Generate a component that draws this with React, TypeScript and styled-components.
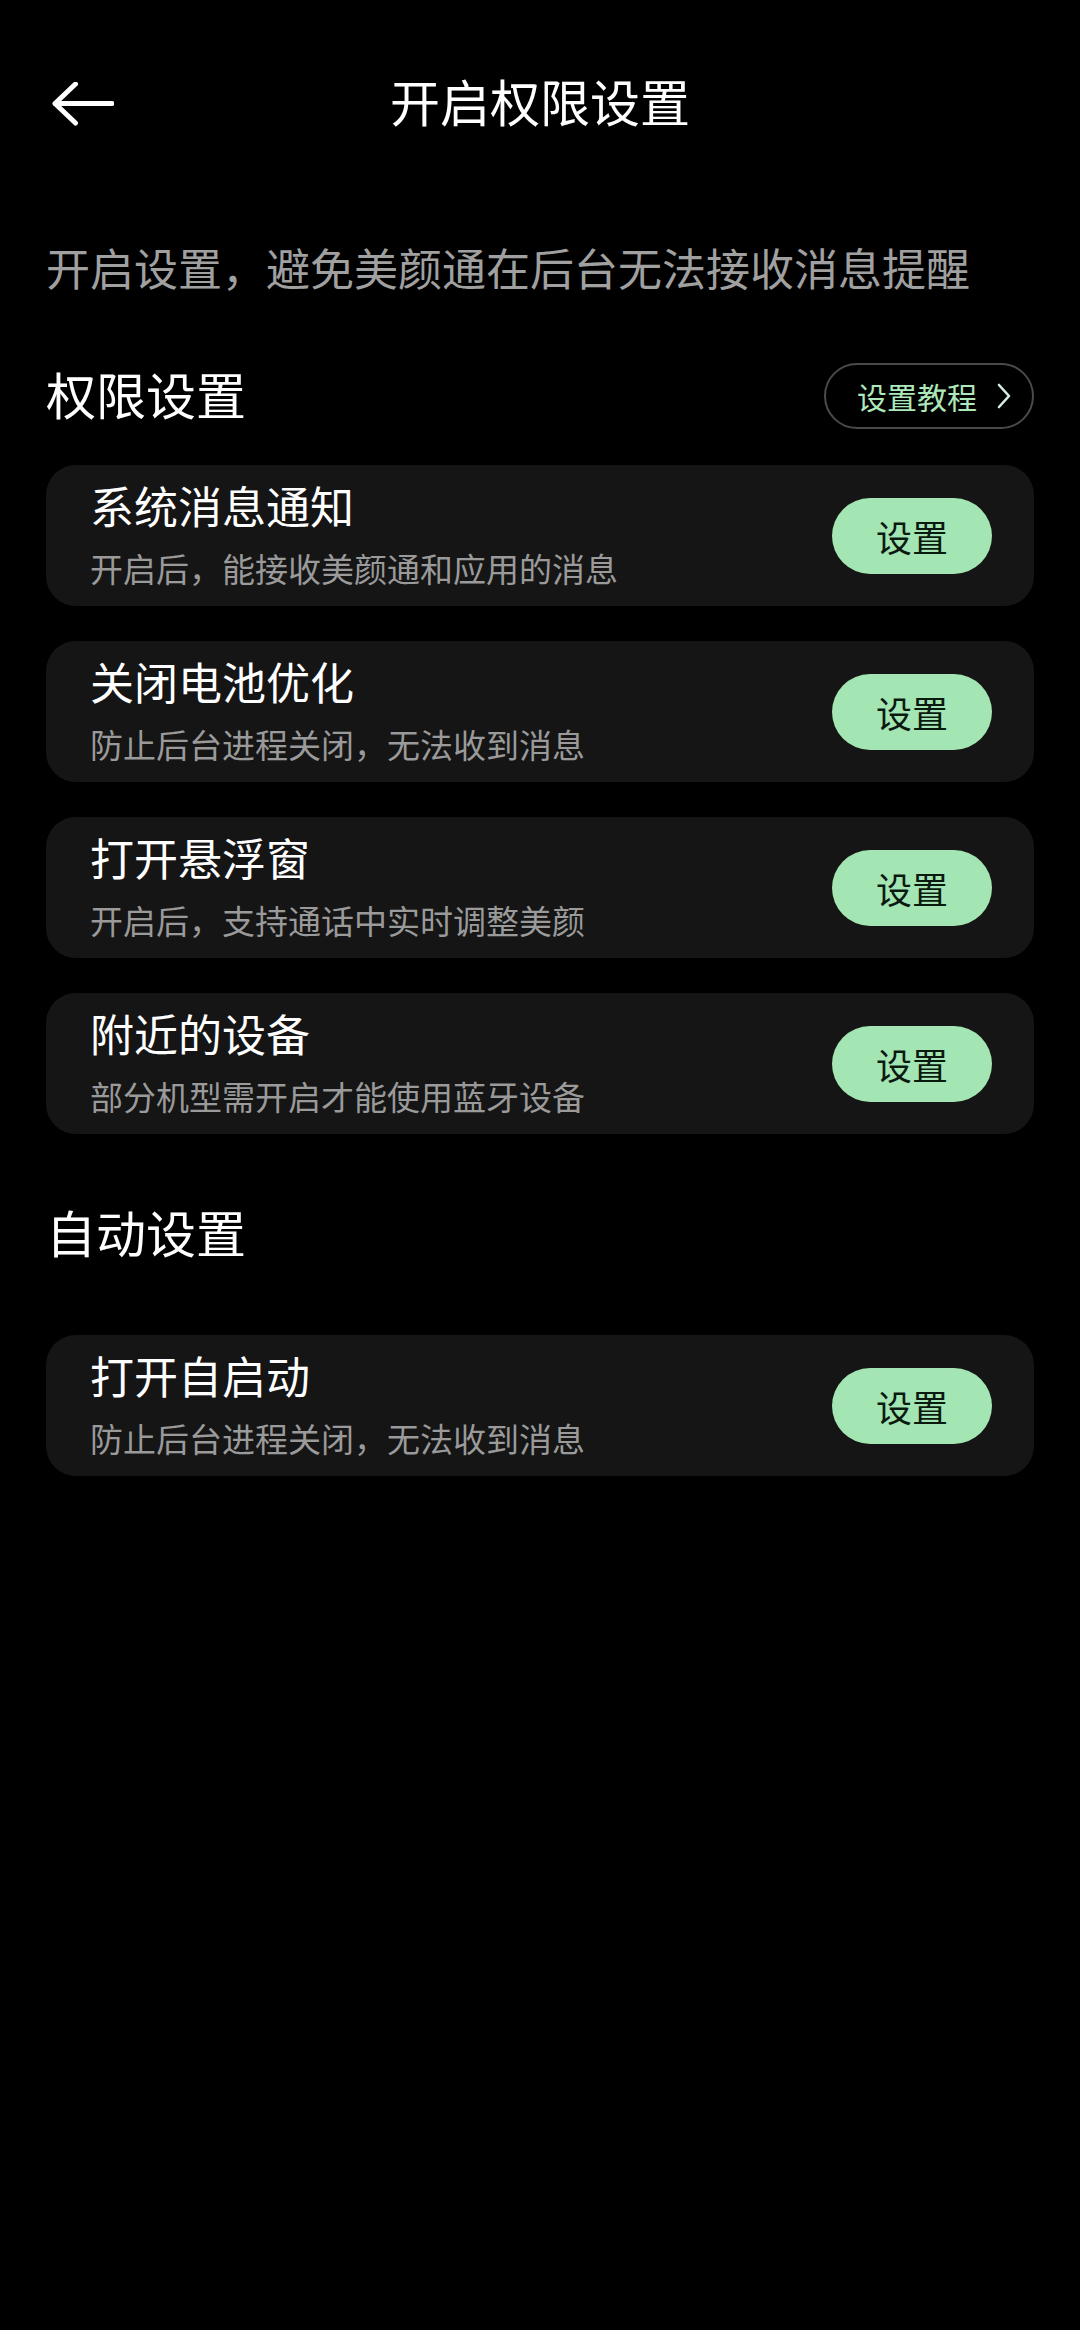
import React from 'react';
import styled, { createGlobalStyle } from 'styled-components';

const GlobalStyle = createGlobalStyle`
  html, body {
    margin: 0;
    padding: 0;
    background: #000;
  }
  body {
    font-family: "Noto Sans CJK SC", "Noto Sans", sans-serif;
    color: #fff;
  }
`;

const Page = styled.div`
  width: 1080px;
  min-height: 2330px;
  background: #000;
  padding: 0 46px;
  box-sizing: border-box;
`;

const Header = styled.header`
  height: 208px;
  margin: 0 -46px;
  padding: 0 52px;
  display: grid;
  grid-template-columns: 1fr auto 1fr;
  align-items: center;
`;

const BackButton = styled.div`
  width: 62px;
  height: 44px;
  display: flex;
  align-items: center;
`;

const Title = styled.h1`
  margin: 0 0 9px;
  font-size: 50px;
  font-weight: 400;
  line-height: 60px;
  color: #fff;
`;

const Intro = styled.p`
  margin: 29px 0 0;
  font-size: 44px;
  line-height: 60px;
  color: #a0a0a0;
`;

const SectionRow = styled.div<{ $top: number; $bottom: number }>`
  margin-top: ${(p) => p.$top}px;
  margin-bottom: ${(p) => p.$bottom}px;
  height: 66px;
  display: flex;
  align-items: center;
  justify-content: space-between;
`;

const SectionTitle = styled.h2`
  margin: 0 0 6px;
  font-size: 50px;
  font-weight: 400;
  line-height: 60px;
  color: #fff;
`;

const TutorialButton = styled.div`
  height: 66px;
  width: 210px;
  box-sizing: border-box;
  border: 2px solid #4a4a4a;
  border-radius: 33px;
  display: flex;
  align-items: center;
  padding-left: 31px;
  gap: 20px;
  font-size: 30px;
  color: #ade8bb;
`;

const CardList = styled.div`
  display: flex;
  flex-direction: column;
  gap: 35px;
`;

const Card = styled.div`
  height: 141px;
  box-sizing: border-box;
  background: #151515;
  border-radius: 30px;
  padding: 11px 42px 16px 44px;
  display: flex;
  align-items: center;
  justify-content: space-between;
`;

const CardText = styled.div`
  align-self: flex-start;
  display: flex;
  flex-direction: column;
  gap: 12px;
`;

const CardTitle = styled.div`
  font-size: 44px;
  line-height: 58px;
  color: #fff;
`;

const CardDesc = styled.div`
  font-size: 33px;
  line-height: 44px;
  color: #9a9a9a;
`;

const SetButton = styled.button`
  width: 160px;
  height: 76px;
  margin-top: 5px;
  border: none;
  border-radius: 38px;
  background: #a3e5b3;
  color: #0b1a10;
  font-family: inherit;
  font-size: 36px;
  padding: 0;
  display: flex;
  align-items: center;
  justify-content: center;
`;

const BackIcon = () => (
  <svg width="62" height="44" viewBox="0 0 62 44" fill="none">
    <path
      d="M60 21.5H3M23.5 2L3 21.5L23.5 41"
      stroke="#fff"
      strokeWidth="5"
      strokeLinecap="round"
      strokeLinejoin="round"
    />
  </svg>
);

const Chevron = () => (
  <svg width="14" height="26" viewBox="0 0 14 26" fill="none">
    <path d="M2 2L12 13L2 24" stroke="#d6ece0" strokeWidth="2.6" strokeLinecap="round" strokeLinejoin="round" />
  </svg>
);

type Item = { title: string; desc: string };

const permissions: Item[] = [
  { title: '系统消息通知', desc: '开启后，能接收美颜通和应用的消息' },
  { title: '关闭电池优化', desc: '防止后台进程关闭，无法收到消息' },
  { title: '打开悬浮窗', desc: '开启后，支持通话中实时调整美颜' },
  { title: '附近的设备', desc: '部分机型需开启才能使用蓝牙设备' },
];

const autoItems: Item[] = [{ title: '打开自启动', desc: '防止后台进程关闭，无法收到消息' }];

const SettingCard = ({ item }: { item: Item }) => (
  <Card>
    <CardText>
      <CardTitle>{item.title}</CardTitle>
      <CardDesc>{item.desc}</CardDesc>
    </CardText>
    <SetButton>设置</SetButton>
  </Card>
);

const App = () => {
  return (
    <>
      <GlobalStyle />
      <Page>
        <Header>
          <BackButton>
            <BackIcon />
          </BackButton>
          <Title>开启权限设置</Title>
          <div />
        </Header>

        <Intro>开启设置，避免美颜通在后台无法接收消息提醒</Intro>

        <SectionRow $top={66} $bottom={36}>
          <SectionTitle>权限设置</SectionTitle>
          <TutorialButton>
            设置教程
            <Chevron />
          </TutorialButton>
        </SectionRow>
        <CardList>
          {permissions.map((item) => (
            <SettingCard key={item.title} item={item} />
          ))}
        </CardList>

        <SectionRow $top={67} $bottom={68}>
          <SectionTitle>自动设置</SectionTitle>
        </SectionRow>
        <CardList>
          {autoItems.map((item) => (
            <SettingCard key={item.title} item={item} />
          ))}
        </CardList>
      </Page>
    </>
  );
};

export default App;
